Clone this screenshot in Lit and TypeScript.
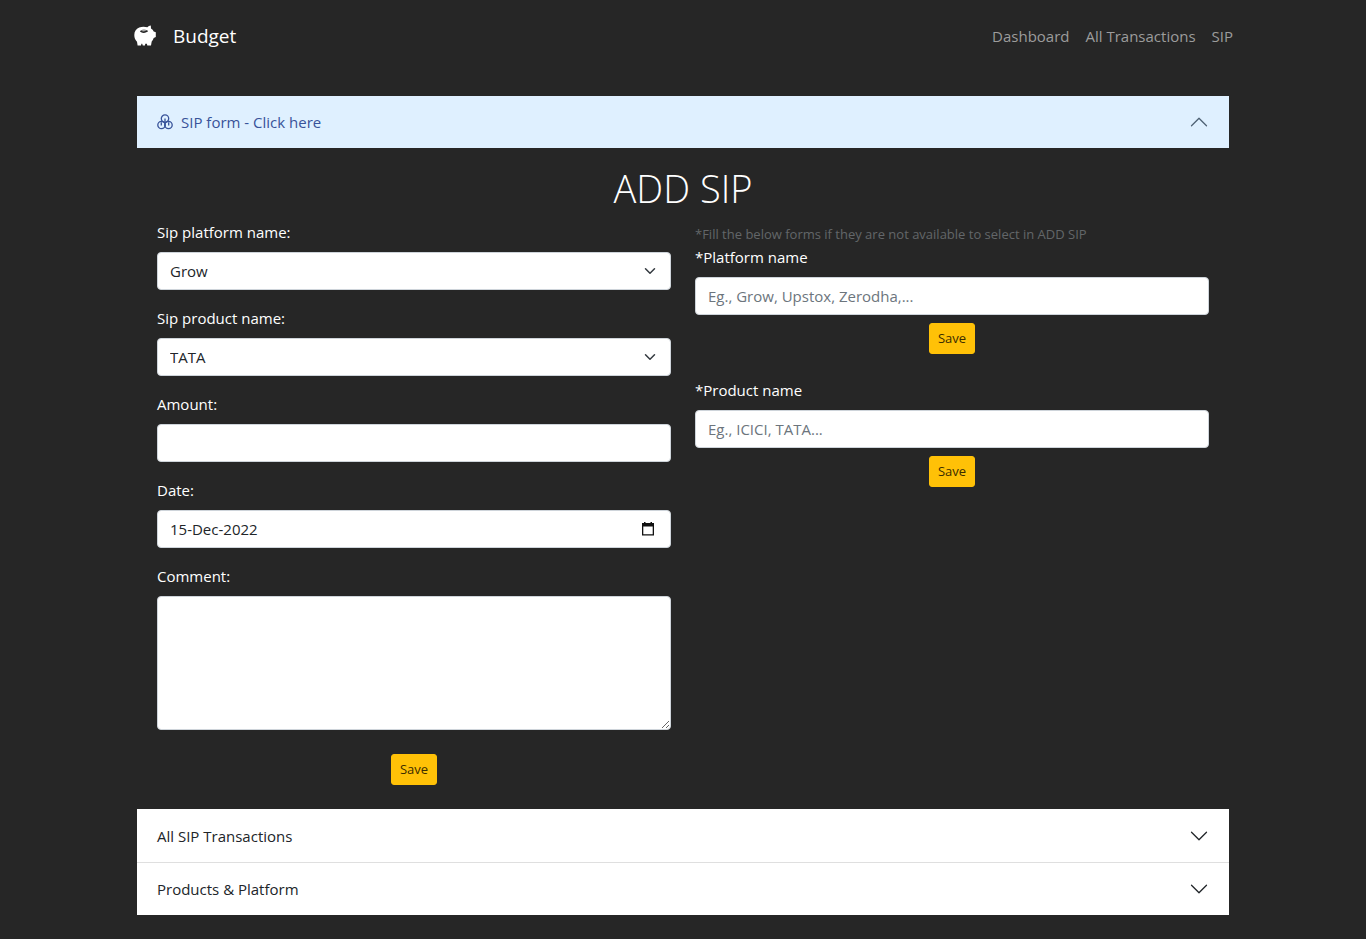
import { LitElement, html, css, svg } from "lit";
import { customElement, state } from "lit/decorators.js";

const piggy = svg`<svg class="piggy" viewBox="0 0 24 24" aria-hidden="true">
  <path fill="currentColor" d="M17.8 1.400 18 4.500C19.400 5.300 20.200 6.300 20.700 7.600L22.800 8.200V13L20.700 14C20.200 15.500 19.600 16.600 18.700 17.600L18 21.600H14.300L13.900 19.800H12.300L11.900 21.600H9.800L9.200 19.800H8.400L8 21.600H4.600L4 17.800C2.200 16 1.300 13.600 1.300 11 1.300 7.500 3 4.600 6.200 3.400 8.800 2.500 12 2.500 14.300 3.300 15.200 2.200 16.400 1.600 17.800 1.400Z"/>
  <path fill="none" stroke="#262626" stroke-width="1.600" stroke-linecap="round" d="M8 7.400C9.800 8.300 12.300 8.300 14 7.200"/>
  <path fill="none" stroke="#262626" stroke-width="0.700" stroke-linecap="round" d="M8 7C9.500 5.600 12.300 5.600 14 7"/>
</svg>`;

const coins = svg`<svg class="coins" viewBox="0 0 16 16" fill="none" stroke="currentColor" stroke-width="1.300" aria-hidden="true">
  <circle cx="8" cy="4.600" r="3.700"/>
  <circle cx="4.500" cy="11" r="3.700"/>
  <circle cx="11.500" cy="11" r="3.700"/>
  <path d="M8 4.500V12M4.300 8.200V11.500M11.700 8.200V11.500"/>
</svg>`;

const chevron = (open: boolean) => svg`<svg class=${open ? "chevron open" : "chevron"} viewBox="0 0 16 16" aria-hidden="true">
  <path fill="currentColor" fill-rule="evenodd" d="M1.646 4.646a.5.5 0 0 1 .708 0L8 10.293l5.646-5.647a.5.5 0 0 1 .708.708l-6 6a.5.5 0 0 1-.708 0l-6-6a.5.5 0 0 1 0-.708z"/>
</svg>`;

const caret = svg`<svg class="caret" viewBox="0 0 16 16" aria-hidden="true">
  <path fill="none" stroke="#343a40" stroke-linecap="round" stroke-linejoin="round" stroke-width="2" d="m2 5 6 6 6-6"/>
</svg>`;

const calendar = svg`<svg viewBox="0 0 16 16" aria-hidden="true">
  <path fill="#111" fill-rule="evenodd" d="M4 1h1.500v1h5V1H12v1h2v12.500H2V2h2zM3.300 5.500v7.700h9.400V5.500z"/>
</svg>`;

@customElement("app-root")
export class AppRoot extends LitElement {
  static styles = css`
    :host {
      display: block;
      min-height: 100vh;
      box-sizing: border-box;
      padding-bottom: 24px;
      background: #262626;
      color: #fff;
      font-family: "Segoe UI", "Open Sans", "Noto Sans", sans-serif;
      font-size: 15px;
      line-height: 24px;
    }
    *, *::before, *::after { box-sizing: border-box; }
    button, input, select, textarea { font: inherit; color: inherit; margin: 0; }
    .container { max-width: 1140px; margin: 0 auto; padding: 0 12px; }
    .navbar { display: flex; align-items: center; justify-content: space-between; height: 72px; }
    .brand { display: flex; align-items: center; gap: 16px; padding-left: 8px; color: #fff; font-size: 19px; text-decoration: none; }
    .piggy { width: 24px; height: 24px; }
    .links { display: flex; margin: 0; padding: 0; list-style: none; }
    .link { display: block; padding: 8px; color: #9c9c9c; text-decoration: none; }
    .accordion { margin: 24px 12px 0; }
    .title { margin: 0; font: inherit; }
    .toggle {
      display: flex; align-items: center; gap: 8px; width: 100%; padding: 14px 20px;
      border: 0; background: #fff; color: #212529; text-align: left; cursor: pointer;
    }
    .toggle.active { background: #dff0ff; color: #38539a; }
    .toggle-text { flex: 1; }
    .closed { border-top: 1px solid #fff; }
    .line { border-top-color: #dfdfdf; }
    .coins { width: 16px; height: 16px; }
    .chevron { width: 20px; height: 20px; flex: none; }
    .open { transform: rotate(180deg); }
    .active .chevron { color: #4f6275; }
    .body { padding: 16px 20px 24px; }
    .heading { margin: 0 0 8px; font-size: 38px; line-height: 48px; font-weight: 300; text-align: center; }
    .columns { display: grid; grid-template-columns: 1fr 1fr; gap: 24px; align-items: start; }
    .form { display: flex; flex-direction: column; gap: 16px; }
    .side { display: flex; flex-direction: column; gap: 24px; }
    .field { display: flex; flex-direction: column; gap: 8px; }
    .control {
      display: block; width: 100%; height: 38px; padding: 6px 12px;
      border: 1px solid #ced4da; border-radius: 4px; background: #fff; color: #212529;
      appearance: none; outline-offset: 2px;
    }
    .control::placeholder { color: #6c757d; opacity: 1; }
    .area { height: 134px; resize: vertical; }
    .wrap { display: grid; align-items: center; }
    .wrap > * { grid-area: 1 / 1; }
    .caret { width: 16px; height: 12px; margin-right: 13px; justify-self: end; pointer-events: none; }
    .picker { width: 16px; height: 16px; margin-right: 15px; padding: 0; border: 0; background: none; justify-self: end; display: block; }
    .picker svg { display: block; }
    .save {
      align-self: center; padding: 4px 8px; border: 1px solid #ffc107; border-radius: 3px;
      background: #ffc107; color: #3b2c00; font-size: 13px; line-height: 21px; cursor: pointer;
    }
    .submit { margin-top: 8px; }
    .hint { margin: 0; padding-top: 4px; color: #636669; font-size: 13px; line-height: 21px; }
    @media (max-width: 767px) { .columns { grid-template-columns: 1fr; } }
  `;

  @state() private expanded = true;

  private select(id: string, label: string, value: string) {
    return html`<div class="field">
      <label for=${id}>${label}</label>
      <div class="wrap"><select class="control" id=${id}><option>${value}</option></select>${caret}</div>
    </div>`;
  }

  private extra(id: string, label: string, placeholder: string) {
    return html`<form class="field" @submit=${this.submit}>
      <label for=${id}>${label}</label>
      <input class="control" id=${id} type="text" placeholder=${placeholder} />
      <button class="save" type="submit">Save</button>
    </form>`;
  }

  private submit(event: Event) {
    event.preventDefault();
  }

  private form() {
    return html`<div class="body">
      <h1 class="heading">ADD SIP</h1>
      <div class="columns">
        <form class="form" @submit=${this.submit}>
          ${this.select("sip-platform", "Sip platform name:", "Grow")}
          ${this.select("sip-product", "Sip product name:", "TATA")}
          <div class="field"><label for="amount">Amount:</label><input class="control" id="amount" type="text" inputmode="decimal" /></div>
          <div class="field">
            <label for="date">Date:</label>
            <div class="wrap">
              <input class="control" id="date" type="text" value="15-Dec-2022" />
              <button class="picker" type="button" aria-label="Choose date">${calendar}</button>
            </div>
          </div>
          <div class="field"><label for="comment">Comment:</label><textarea class="control area" id="comment"></textarea></div>
          <button class="save submit" type="submit">Save</button>
        </form>
        <div>
          <p class="hint">*Fill the below forms if they are not available to select in ADD SIP</p>
          <div class="side">
            ${this.extra("platform", "*Platform name", "Eg., Grow, Upstox, Zerodha,...")}
            ${this.extra("product", "*Product name", "Eg., ICICI, TATA...")}
          </div>
        </div>
      </div>
    </div>`;
  }

  render() {
    return html`
      <header class="container">
        <nav class="navbar">
          <a class="brand" href="#">${piggy}<span>Budget</span></a>
          <ul class="links">
            <li><a class="link" href="#dashboard">Dashboard</a></li>
            <li><a class="link" href="#transactions">All Transactions</a></li>
            <li><a class="link" href="#sip">SIP</a></li>
          </ul>
        </nav>
      </header>
      <main class="container">
        <div class="accordion">
          <h2 class="title">
            <button class="toggle active" aria-expanded=${this.expanded} @click=${() => (this.expanded = !this.expanded)}>
              ${coins}<span class="toggle-text">SIP form - Click here</span>${chevron(this.expanded)}
            </button>
          </h2>
          ${this.expanded ? this.form() : null}
          <h2 class="title"><button class="toggle closed" aria-expanded="false"><span class="toggle-text">All SIP Transactions</span>${chevron(false)}</button></h2>
          <h2 class="title"><button class="toggle closed line" aria-expanded="false"><span class="toggle-text">Products &amp; Platform</span>${chevron(false)}</button></h2>
        </div>
      </main>
    `;
  }
}
